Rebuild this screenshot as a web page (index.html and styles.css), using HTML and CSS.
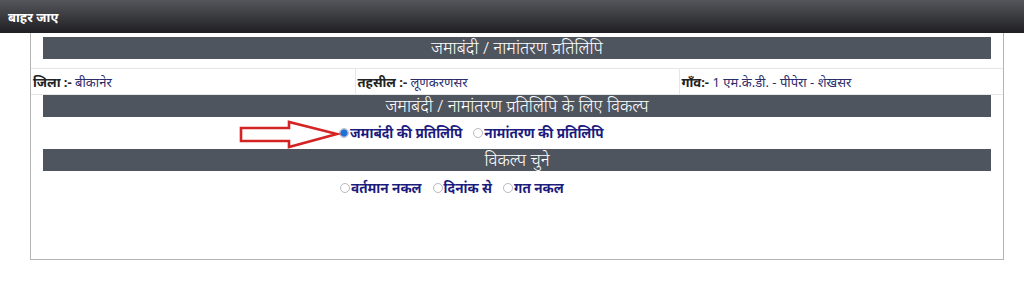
FILE: index.html
```html
<!DOCTYPE html>
<html lang="hi">
<head>
<meta charset="utf-8">
<title>जमाबंदी / नामांतरण प्रतिलिपि</title>
<link rel="stylesheet" href="styles.css">
</head>
<body>
<div class="topbar"><a class="logout" href="#">बाहर जाए</a></div>
<div class="panel">
  <div class="hdr">जमाबंदी / नामांतरण प्रतिलिपि</div>
  <table class="info">
    <tr>
      <td><b>जिला :-</b> <span class="val">बीकानेर</span></td>
      <td><b>तहसील :-</b> <span class="val">लूणकरणसर</span></td>
      <td><b>गाँव:-</b> <span class="val">1 एम.के.डी. - पीपेरा - शेखसर</span></td>
    </tr>
  </table>
  <div class="hdr">जमाबंदी / नामांतरण प्रतिलिपि के लिए विकल्प</div>
  <div class="opts opts1">
    <svg class="arrow" width="102" height="30" viewBox="0 0 102 30"><path d="M2 8 H50 V2 L98 14 L50 27 V21 H2 Z" fill="#fff" stroke="#d52424" stroke-width="2.6" stroke-linejoin="miter"/></svg>
    <label><input type="radio" name="t" checked>जमाबंदी की प्रतिलिपि</label>
    <label><input type="radio" name="t">नामांतरण की प्रतिलिपि</label>
  </div>
  <div class="hdr">विकल्प चुने</div>
  <div class="opts opts2">
    <label><input type="radio" name="k">वर्तमान नकल</label>
    <label><input type="radio" name="k">दिनांक से</label>
    <label><input type="radio" name="k">गत नकल</label>
  </div>
</div>
</body>
</html>
```
FILE: styles.css
```css
body {
  margin: 0;
  font-family: "Noto Sans", "Liberation Sans", sans-serif;
  background: #fff;
}
.topbar {
  height: 33px;
  background: linear-gradient(#55565b, #1f1f23);
  display: flex;
  align-items: center;
  padding-left: 8px;
}
.logout {
  color: #fff;
  font-weight: bold;
  font-size: 13px;
  text-decoration: none;
}
.panel {
  margin: 0 20px 0 30px;
  border: 1px solid #b4b4b4;
  border-top: none;
  padding-top: 4px;
  height: 222px;
}
.hdr {
  margin: 0 12px;
  height: 22px;
  background: #4f555e;
  color: #fff;
  font-size: 17px;
  line-height: 22px;
  text-align: center;
  font-weight: 300;
}
.info {
  width: 100%;
  border-collapse: collapse;
  margin-top: 9px;
  font-size: 13px;
}
.info td {
  border: 1px solid #e6e6e6;
  height: 25px;
  padding: 0 2px;
  width: 33.3%;
  color: #222;
  vertical-align: middle;
}
.info tr td:first-child { border-left: none; }
.info tr td:last-child { border-right: none; }
.val { color: #2c2c6c; }
.opts {
  display: flex;
  align-items: center;
  color: #1b1b7e;
  font-weight: bold;
  font-size: 13.5px;
  position: relative;
  padding-left: 308px;
}
.opts1 { height: 32px; }
.opts2 { height: 34px; padding-left: 309px; }
.opts label {
  display: flex;
  align-items: center;
  margin-right: 11px;
}
.opts input {
  appearance: none;
  -webkit-appearance: none;
  width: 10px;
  height: 10px;
  margin: 0 1px 0 0;
  border: 1px solid #b9b9c4;
  border-radius: 50%;
  background: #fff;
}
.opts input:checked {
  background: radial-gradient(circle, #1f6fd6 0 3.2px, #9fbde6 3.8px, #fff 4.6px);
}
.arrow {
  position: absolute;
  left: 208px;
  top: 3px;
}
```
